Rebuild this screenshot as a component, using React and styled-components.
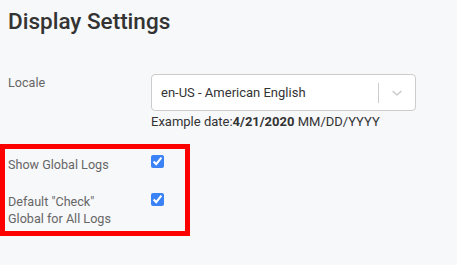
import React from 'react';
import styled, { createGlobalStyle } from 'styled-components';

const GlobalStyle = createGlobalStyle`
  html, body {
    margin: 0;
    background: #f7f8fa;
    font-family: Roboto, "Liberation Sans", sans-serif;
  }
`;

const Page = styled.div`
  position: relative;
  padding: 6px 8px 0 8px;
  width: 457px;
  height: 265px;
  box-sizing: border-box;
  overflow: hidden;
`;

const Title = styled.h1`
  margin: 0;
  font-size: 22.5px;
  font-weight: 500;
  line-height: 30px;
  color: #333;
`;

const Form = styled.div`
  margin-top: 38px;
  display: grid;
  grid-template-columns: 143px 265px;
`;

const Label = styled.div`
  font-size: 12.6px;
  line-height: 17px;
  color: #666;
  padding-top: ${p => p.top || 0}px;
`;

const Field = styled.div`
  padding-top: ${p => p.top || 0}px;
`;

const Select = styled.div`
  height: 37px;
  box-sizing: border-box;
  border: 1px solid #ccc;
  border-radius: 4px;
  background: #fff;
  display: flex;
  align-items: center;
`;

const Value = styled.div`
  flex: 1;
  padding-left: 9px;
  font-size: 13px;
  color: #333;
`;

const Separator = styled.span`
  width: 1px;
  height: 20px;
  background: #ccc;
`;

const Arrow = styled.div`
  width: 36px;
  display: flex;
  justify-content: center;
  color: #ccc;
`;

const Hint = styled.div`
  margin-top: 3px;
  font-size: 13px;
  color: #333;
  b { font-weight: 700; }
`;

const Check = styled.input`
  display: block;
  margin: 0;
  width: 13px;
  height: 13px;
  accent-color: #3b82f6;
`;

const Highlight = styled.div`
  position: absolute;
  left: 0;
  top: 144px;
  width: 190px;
  height: 92px;
  box-sizing: border-box;
  border: 5px solid #ff0000;
  pointer-events: none;
`;

export default function App() {
  return (
    <Page>
      <GlobalStyle />
      <Title>Display Settings</Title>
      <Form>
        <Label>Locale</Label>
        <Field>
          <Select>
            <Value>en-US - American English</Value>
            <Separator />
            <Arrow>
              <svg width="16" height="16" viewBox="0 0 20 20">
                <path fill="none" stroke="currentColor" strokeWidth="1.8" strokeLinecap="round" strokeLinejoin="round" d="M5 8l5 4.5 5-4.5" />
              </svg>
            </Arrow>
          </Select>
          <Hint>Example date:<b>4/21/2020</b> MM/DD/YYYY</Hint>
        </Field>
        <Label top={27}>Show Global Logs</Label>
        <Field top={26}><Check type="checkbox" defaultChecked /></Field>
        <Label top={20}>Default "Check"<br />Global for All Logs</Label>
        <Field top={20}><Check type="checkbox" defaultChecked /></Field>
      </Form>
      <Highlight />
    </Page>
  );
}
